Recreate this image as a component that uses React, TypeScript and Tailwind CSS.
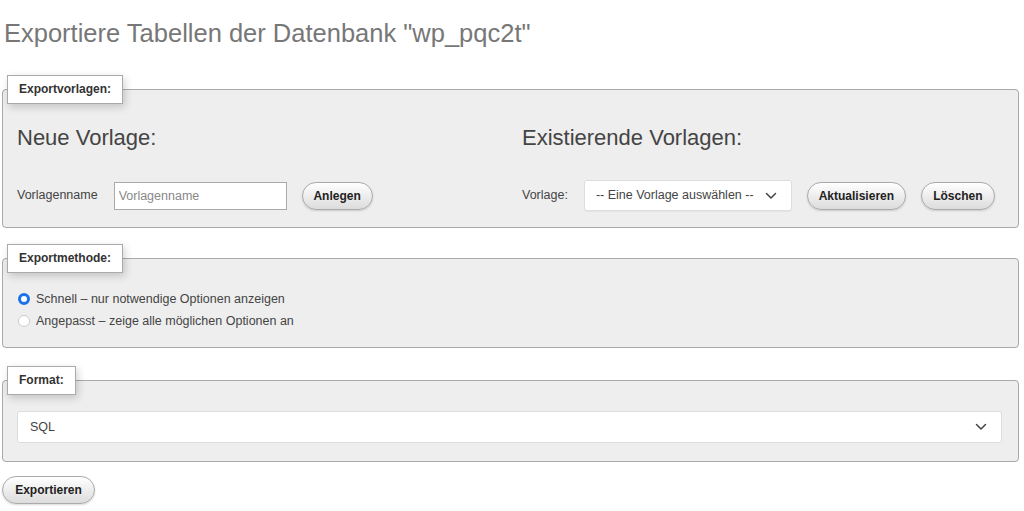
import React from "react";

function Chevron({ className }: { className?: string }) {
  return (
    <svg className={className} width="12" height="8" viewBox="0 0 12 8" fill="none">
      <path d="M1.5 1.5 L6 6 L10.5 1.5" stroke="#444" strokeWidth="1.5" strokeLinecap="round" strokeLinejoin="round" />
    </svg>
  );
}

function Btn({ children, className = "" }: { children: React.ReactNode; className?: string }) {
  return (
    <button
      className={
        "h-[28px] rounded-full border border-[#aaa] bg-gradient-to-b from-white to-[#dcdcdc] font-bold text-[12px] text-[#222] leading-none shadow-[0_1px_2px_rgba(0,0,0,0.15)] " +
        className
      }
    >
      {children}
    </button>
  );
}

function Legend({ children }: { children: React.ReactNode }) {
  return (
    <legend className="ml-[-10px] px-[11px] py-[6px] border border-[#aaa] bg-white font-bold text-[12px] leading-[15px] text-[#333] shadow-[2px_3px_8px_rgba(0,0,0,0.18)]">
      {children}
    </legend>
  );
}

export default function App() {
  return (
    <div className="w-[1024px] h-[511px] overflow-hidden bg-white text-[#444] font-['Liberation_Sans',Arial,sans-serif]">
      <h1 className="pt-[21px] pl-[4px] text-[25.5px] leading-[25px] text-[#777] font-normal">
        Exportiere Tabellen der Datenbank "wp_pqc2t"
      </h1>

      <fieldset className="mt-[29px] ml-[2px] w-[1017px] border border-[#aaa] rounded-[4px] bg-[#eee] px-[14px] pt-[23px] pb-[16px]">
        <Legend>Exportvorlagen:</Legend>
        <div className="flex">
          <div className="w-[505px]">
            <h3 className="text-[22px] leading-[22px] text-[#444]">Neue Vorlage:</h3>
            <div className="mt-[31px] h-[31px] flex items-center">
              <label className="text-[12.5px] text-[#444]">Vorlagenname</label>
              <input
                className="ml-[16px] w-[173px] h-[28px] border border-[#aaa] bg-white px-[4px] text-[12.5px] text-[#444] placeholder:text-[#888] outline-none"
                placeholder="Vorlagenname"
              />
              <Btn className="ml-[15px] w-[71px]">Anlegen</Btn>
            </div>
          </div>
          <div className="flex-1">
            <h3 className="text-[22px] leading-[22px] text-[#444]">Existierende Vorlagen:</h3>
            <div className="mt-[31px] h-[31px] flex items-center">
              <label className="text-[12.5px] text-[#444]">Vorlage:</label>
              <div className="ml-[16px] w-[208px] h-[31px] flex items-center justify-between border border-[#ddd] rounded-[3px] bg-white pl-[11px] pr-[14px] text-[12.5px] text-[#444] shadow-[0_1px_1px_rgba(0,0,0,0.04)]">
                <span>-- Eine Vorlage auswählen --</span>
                <Chevron />
              </div>
              <Btn className="ml-[15px] w-[99px]">Aktualisieren</Btn>
              <Btn className="ml-[15px] w-[74px]">Löschen</Btn>
            </div>
          </div>
        </div>
      </fieldset>

      <fieldset className="mt-[16px] ml-[2px] w-[1017px] border border-[#aaa] rounded-[4px] bg-[#eee] px-[14px] pt-[15px] pb-[15px]">
        <Legend>Exportmethode:</Legend>
        <div className="flex items-center h-[22px] text-[12.5px]">
          <span className="ml-[1px] w-[12px] h-[12px] rounded-full border-[3.5px] border-[#1a73e8] bg-white" />
          <span className="ml-[6px]">Schnell – nur notwendige Optionen anzeigen</span>
        </div>
        <div className="flex items-center h-[22px] text-[12.5px]">
          <span className="ml-[1px] w-[12px] h-[12px] rounded-full border border-[#ccc] bg-white" />
          <span className="ml-[6px]">Angepasst – zeige alle möglichen Optionen an</span>
        </div>
      </fieldset>

      <fieldset className="mt-[18px] ml-[2px] w-[1017px] border border-[#aaa] rounded-[4px] bg-[#eee] px-[14px] pt-[16px] pb-[18px]">
        <Legend>Format:</Legend>
        <div className="w-[985px] h-[32px] flex items-center justify-between border border-[#ddd] rounded-[3px] bg-white pl-[12px] pr-[14px] text-[12.5px] text-[#444]">
          <span>SQL</span>
          <Chevron />
        </div>
      </fieldset>

      <Btn className="mt-[14px] ml-[2px] w-[93px] h-[28px]">Exportieren</Btn>
    </div>
  );
}
